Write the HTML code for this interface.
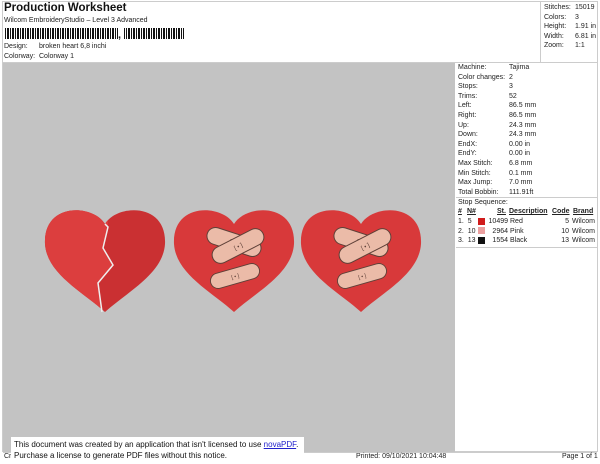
<!DOCTYPE html>
<html><head><style>
body{margin:0;width:600px;height:464px;background:#fff;font-family:"Liberation Sans",sans-serif;position:relative;overflow:hidden;color:#222}
.a{position:absolute;font-size:7px;white-space:nowrap}
.sw{position:absolute;width:7px;height:7px}
</style></head><body>
<div style="position:absolute;left:2px;top:1px;width:596px;height:451px;border:1px solid #ccc;box-sizing:border-box"></div>
<div class="a" style="left:4px;top:2px;font-size:11.5px;font-weight:bold;color:#111">Production Worksheet</div>
<div class="a" style="left:4px;top:17px">Wilcom EmbroideryStudio – Level 3 Advanced</div>
<div style="position:absolute;left:5px;top:28px;width:113px;height:11px;background:repeating-linear-gradient(90deg,#111 0 1px,#fff 1px 2px,#111 2px 4px,#fff 4px 5px)"></div>
<div class="a" style="left:118px;top:29px;font-size:11px;font-weight:bold">,</div>
<div style="position:absolute;left:124px;top:28px;width:60px;height:11px;background:repeating-linear-gradient(90deg,#111 0 1px,#fff 1px 2px,#111 2px 3px,#fff 3px 4px,#111 4px 5px)"></div>
<div class="a" style="left:4px;top:43px">Design:</div><div class="a" style="left:39px;top:43px">broken heart 6,8 inchi</div>
<div class="a" style="left:4px;top:53px">Colorway:</div><div class="a" style="left:39px;top:53px">Colorway 1</div>
<div style="position:absolute;left:540px;top:1px;width:1px;height:61px;background:#ccc"></div>
<div class="a" style="left:544px;top:3px;line-height:9.6px">Stitches:<br>Colors:<br>Height:<br>Width:<br>Zoom:</div>
<div class="a" style="left:575px;top:3px;line-height:9.6px">15019<br>3<br>1.91 in<br>6.81 in<br>1:1</div>
<div style="position:absolute;left:3px;top:62px;width:594px;height:1px;background:#ccc"></div>
<div style="position:absolute;left:3px;top:63px;width:452px;height:389px;background:#c3c3c3"></div>

<svg style="position:absolute;left:0;top:0" width="455" height="452">
<defs>
<path id="h" d="M62 20 C50 0 0 -2 2 40 C4 70 40 88 62 108 C84 88 120 70 122 40 C124 -2 74 0 62 20Z"/>
<clipPath id="lc"><path d="M-5 -5 L64 -5 L65 23 L60 44 L70 61 L55 79 L59 110 L-5 110Z"/></clipPath>
<g id="b"><rect x="-28" y="-8.5" width="56" height="17" rx="8.5" fill="#ebbba8" stroke="#5e4038" stroke-width="1"/><text x="0" y="2.5" font-size="6" text-anchor="middle" fill="#5e4038" font-family="Liberation Sans">[ • ]</text></g>
</defs>
<g transform="translate(43,204)">
<use href="#h" fill="#ca3032"/>
<use href="#h" fill="#dc3e3e" clip-path="url(#lc)"/>
<polyline points="62,20 65,23 60,44 70,61 55,79 59,108" fill="none" stroke="#eee" stroke-width="1.5"/>
</g>
<g transform="translate(172,204)">
<use href="#h" fill="#d8393a"/>
<use href="#b" transform="translate(62,38) rotate(18)"/>
<use href="#b" transform="translate(66,42) rotate(-27)"/>
<use href="#b" transform="translate(63,72) rotate(-16) scale(0.9)"/>
</g>
<g transform="translate(299,204)">
<use href="#h" fill="#d8393a"/>
<use href="#b" transform="translate(62,38) rotate(18)"/>
<use href="#b" transform="translate(66,42) rotate(-27)"/>
<use href="#b" transform="translate(63,72) rotate(-16) scale(0.9)"/>
</g>
</svg>

<div class="a" style="left:458px;top:63px;line-height:9.6px">Machine:<br>Color changes:<br>Stops:<br>Trims:<br>Left:<br>Right:<br>Up:<br>Down:<br>EndX:<br>EndY:<br>Max Stitch:<br>Min Stitch:<br>Max Jump:<br>Total Bobbin:</div>
<div class="a" style="left:509px;top:63px;line-height:9.6px">Tajima<br>2<br>3<br>52<br>86.5 mm<br>86.5 mm<br>24.3 mm<br>24.3 mm<br>0.00 in<br>0.00 in<br>6.8 mm<br>0.1 mm<br>7.0 mm<br>111.91ft</div>
<div style="position:absolute;left:456px;top:197px;width:141px;height:1px;background:#ccc"></div>
<div class="a" style="left:458px;top:199px">Stop Sequence:</div>
<div class="a" style="left:458px;top:208px;font-weight:bold;text-decoration:underline">#</div>
<div class="a" style="left:467px;top:208px;font-weight:bold;text-decoration:underline">N#</div>
<div class="a" style="left:497px;top:208px;font-weight:bold;text-decoration:underline">St.</div>
<div class="a" style="left:509px;top:208px;font-weight:bold;text-decoration:underline">Description</div>
<div class="a" style="left:552px;top:208px;font-weight:bold;text-decoration:underline">Code</div>
<div class="a" style="left:573px;top:208px;font-weight:bold;text-decoration:underline">Brand</div>

<div class="a" style="left:458px;top:217px;line-height:9.6px">1.&nbsp;&nbsp;5<br>2.&nbsp;&nbsp;10<br>3.&nbsp;&nbsp;13</div>
<div class="sw" style="left:478px;top:218px;background:#d01c1c"></div>
<div class="sw" style="left:478px;top:227px;background:#eca0a0"></div>
<div class="sw" style="left:478px;top:237px;background:#111"></div>
<div class="a" style="left:486px;top:217px;line-height:9.6px;width:22px;text-align:right">10499<br>2964<br>1554</div>
<div class="a" style="left:510px;top:217px;line-height:9.6px">Red<br>Pink<br>Black</div>
<div class="a" style="left:552px;top:217px;line-height:9.6px;width:17px;text-align:right">5<br>10<br>13</div>
<div class="a" style="left:572px;top:217px;line-height:9.6px">Wilcom<br>Wilcom<br>Wilcom</div>
<div style="position:absolute;left:456px;top:247px;width:141px;height:1px;background:#ccc"></div>

<div style="position:absolute;left:3px;top:452px;width:594px;height:1px;background:#ccc"></div>
<div class="a" style="left:4px;top:453px">Cr</div>
<div class="a" style="left:356px;top:453px">Printed: 09/10/2021 10:04:48</div>
<div class="a" style="left:562px;top:453px">Page 1 of 1</div>
<div style="position:absolute;left:11px;top:437px;width:293px;height:27px;background:#fff"></div>
<div class="a" style="left:14px;top:439px;font-size:8px;line-height:11px;color:#111">This document was created by an application that isn't licensed to use <span style="color:#2222cc;text-decoration:underline">novaPDF</span>.<br>Purchase a license to generate PDF files without this notice.</div>
</body></html>
